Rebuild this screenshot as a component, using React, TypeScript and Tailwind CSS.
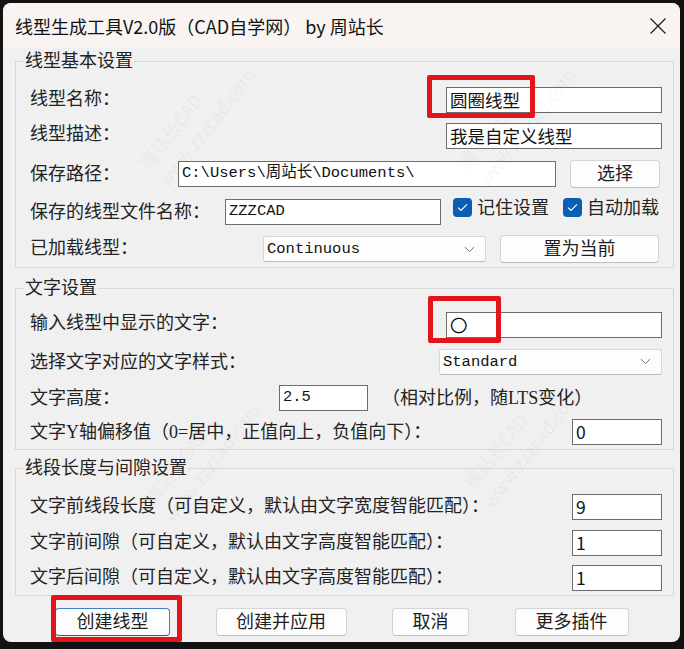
import React from "react";

const sans = "font-['Noto_Sans_CJK_SC','Noto_Sans',sans-serif]";
const serif = "font-['Liberation_Serif','Noto_Sans_CJK_SC',serif]";
const mono = "font-['Liberation_Mono','Noto_Sans_CJK_SC',monospace]";

function Label({ children, className = "" }: { children: React.ReactNode; className?: string }) {
  return (
    <span className={`${serif} text-[18px] leading-none text-[#232323] whitespace-nowrap ${className}`}>
      {children}
    </span>
  );
}

function TextBox({
  width,
  children,
  font = sans,
  size = "text-[17.5px]",
}: {
  width: string;
  children: React.ReactNode;
  font?: string;
  size?: string;
}) {
  return (
    <div
      className={`${width} h-[26px] shrink-0 border border-[#6c6c6c] bg-white pl-[3px] flex items-center ${font} ${size} leading-none text-[#111] whitespace-nowrap overflow-hidden`}
    >
      {children}
    </div>
  );
}

function Chevron() {
  return (
    <svg width="11" height="7" viewBox="0 0 11 7" className="shrink-0">
      <path d="M1 1.2 L5.5 5.6 L10 1.2" fill="none" stroke="#6a6a6a" strokeWidth="1" />
    </svg>
  );
}

function Select({ width, value }: { width: string; value: string }) {
  return (
    <div
      className={`${width} h-[26px] shrink-0 rounded-[3px] border border-[#d6d6d6] border-b-[#bcbcbc] bg-[#fdfdfd] pl-[3px] pr-[10px] flex items-center justify-between`}
    >
      <span className={`${mono} text-[15.5px] leading-none text-[#111] mt-[2px]`}>{value}</span>
      <Chevron />
    </div>
  );
}

function Btn({
  width,
  children,
  primary = false,
}: {
  width: string;
  children: React.ReactNode;
  primary?: boolean;
}) {
  return (
    <button
      className={`${width} h-[28px] shrink-0 rounded-[4px] border ${
        primary ? "border-[#3f7fc6] border-b-[#1e5fae]" : "border-[#d4d4d4] border-b-[#bdbdbd]"
      } bg-[#fdfdfd] flex items-center justify-center ${serif} text-[18px] leading-none text-[#1e1e1e]`}
    >
      {children}
    </button>
  );
}

function Check({ label }: { label: string }) {
  return (
    <div className="flex items-center gap-[5px] -mt-[9px]">
      <div className="w-[19px] h-[19px] rounded-[4px] bg-[#0a5fb4] flex items-center justify-center">
        <svg width="11" height="9" viewBox="0 0 11 9">
          <path d="M1 4.6 L4 7.4 L10 1.4" fill="none" stroke="#ffffff" strokeWidth="1.1" />
        </svg>
      </div>
      <Label>{label}</Label>
    </div>
  );
}

function Group({
  title,
  className,
  children,
}: {
  title: string;
  className: string;
  children: React.ReactNode;
}) {
  return (
    <fieldset className={`ml-[12px] w-[659px] border border-[#d8d8d8] pl-[14px] pr-[11px] ${className}`}>
      <legend className={`${serif} -ml-[6px] px-[1px] text-[18px] leading-[22px] text-[#232323]`}>
        {title}
      </legend>
      {children}
    </fieldset>
  );
}

function Watermark({ pos }: { pos: string }) {
  return (
    <div
      className={`absolute ${pos} rotate-[-52deg] flex flex-col items-center ${sans} text-[18px] leading-[26px] text-black/[0.055] pointer-events-none select-none`}
    >
      <span>周站长CAD</span>
      <span className="ml-[50px]">www.zzzcad.com</span>
    </div>
  );
}

export default function App() {
  return (
    <div className="relative w-[684px] h-[649px] bg-[#121212] pt-[3px] pl-[3px]">
      <div className="relative w-[677px] h-[639px] rounded-[8px] overflow-hidden bg-[#f0f0f0] flex flex-col">
        {/* title bar */}
        <div className="h-[45px] shrink-0 bg-[#f9f4f2] pl-[12px] pr-[14px] flex items-center justify-between">
          <span className={`${sans} text-[18px] leading-none text-[#111]`}>
            线型生成工具V2.0版（CAD自学网） by 周站长
          </span>
          <svg width="16" height="16" viewBox="0 0 16 16">
            <path d="M0.5 0.5 L15.5 15.5 M15.5 0.5 L0.5 15.5" stroke="#1b1b1b" strokeWidth="1.2" />
          </svg>
        </div>

        <Group title="线型基本设置" className="mt-[2px] pt-[10px]">
          <div className="h-[36px] flex items-center">
            <Label className="-mt-[2px]">线型名称：</Label>
            <div className="ml-auto">
              <TextBox width="w-[216px]">圆圈线型</TextBox>
            </div>
          </div>
          <div className="h-[36px] flex items-center">
            <Label className="-mt-[4px]">线型描述：</Label>
            <div className="ml-auto">
              <TextBox width="w-[216px]">我是自定义线型</TextBox>
            </div>
          </div>
          <div className="h-[39px] flex items-center">
            <Label>保存路径：</Label>
            <div className="ml-auto flex items-center gap-[14px] mr-[2px]">
              <TextBox width="w-[378px]" font={mono} size="text-[15.5px]">
                C:\Users\周站长\Documents\
              </TextBox>
              <Btn width="w-[90px]">选择</Btn>
            </div>
          </div>
          <div className="h-[38px] flex items-center">
            <Label>保存的线型文件名称：</Label>
            <div className="ml-auto flex items-center mr-[3px]">
              <TextBox width="w-[216px]" font={mono} size="text-[15.5px]">
                ZZZCAD
              </TextBox>
              <div className="ml-[12px] flex items-center gap-[14px]">
                <Check label="记住设置" />
                <Check label="自动加载" />
              </div>
            </div>
          </div>
          <div className="h-[36px] flex items-center">
            <Label className="-mt-[3px]">已加载线型：</Label>
            <div className="ml-auto flex items-center gap-[14px] mr-[3px]">
              <Select width="w-[223px]" value="Continuous" />
              <Btn width="w-[159px]">置为当前</Btn>
            </div>
          </div>
        </Group>

        <Group title="文字设置" className="mt-[9px] pt-[8px]">
          <div className="h-[36px] flex items-center">
            <Label className="-mt-[4px]">输入线型中显示的文字：</Label>
            <div className="ml-auto">
              <TextBox width="w-[216px]">〇</TextBox>
            </div>
          </div>
          <div className="h-[37px] flex items-center">
            <Label>选择文字对应的文字样式：</Label>
            <div className="ml-auto">
              <Select width="w-[223px]" value="Standard" />
            </div>
          </div>
          <div className="h-[35px] flex items-center">
            <Label className="w-[249px]">文字高度：</Label>
            <TextBox width="w-[89px]" font={mono} size="text-[15.5px]">
              2.5
            </TextBox>
            <Label className="ml-[14px]">（相对比例，随LTS变化）</Label>
          </div>
          <div className="h-[34px] flex items-center">
            <Label>文字Y轴偏移值（0=居中，正值向上，负值向下）：</Label>
            <div className="ml-auto">
              <TextBox width="w-[90px]">0</TextBox>
            </div>
          </div>
        </Group>

        <Group title="线段长度与间隙设置" className="mt-[7px] pt-[10px]">
          <div className="h-[36px] flex items-center">
            <Label className="-mt-[3px]">文字前线段长度（可自定义，默认由文字宽度智能匹配）：</Label>
            <div className="ml-auto">
              <TextBox width="w-[90px]">9</TextBox>
            </div>
          </div>
          <div className="h-[36px] flex items-center">
            <Label className="-mt-[3px]">文字前间隙（可自定义，默认由文字高度智能匹配）：</Label>
            <div className="ml-auto">
              <TextBox width="w-[90px]">1</TextBox>
            </div>
          </div>
          <div className="h-[34px] flex items-center">
            <Label className="-mt-[2px]">文字后间隙（可自定义，默认由文字高度智能匹配）：</Label>
            <div className="ml-auto">
              <TextBox width="w-[90px]">1</TextBox>
            </div>
          </div>
        </Group>

        <div className="mt-[12px] pl-[52px] flex items-center gap-[45.5px]">
          <Btn width="w-[115px]" primary>
            创建线型
          </Btn>
          <Btn width="w-[131px]">创建并应用</Btn>
          <Btn width="w-[77px]">取消</Btn>
          <Btn width="w-[114px]">更多插件</Btn>
        </div>

        <Watermark pos="left-[80px] top-[110px]" />
        <Watermark pos="left-[400px] top-[110px]" />
        <Watermark pos="left-[85px] top-[445px]" />
        <Watermark pos="left-[405px] top-[430px]" />
      </div>

      {/* red annotation boxes */}
      <div className="absolute left-[427px] top-[75px] w-[108px] h-[43px] border-[5px] border-[#e3151b] rounded-[2px] pointer-events-none" />
      <div className="absolute left-[428px] top-[296px] w-[73px] h-[47px] border-[5px] border-[#e3151b] rounded-[2px] pointer-events-none" />
      <div className="absolute left-[51px] top-[595px] w-[131px] h-[47px] border-[5px] border-[#e3151b] rounded-[2px] pointer-events-none" />
    </div>
  );
}
